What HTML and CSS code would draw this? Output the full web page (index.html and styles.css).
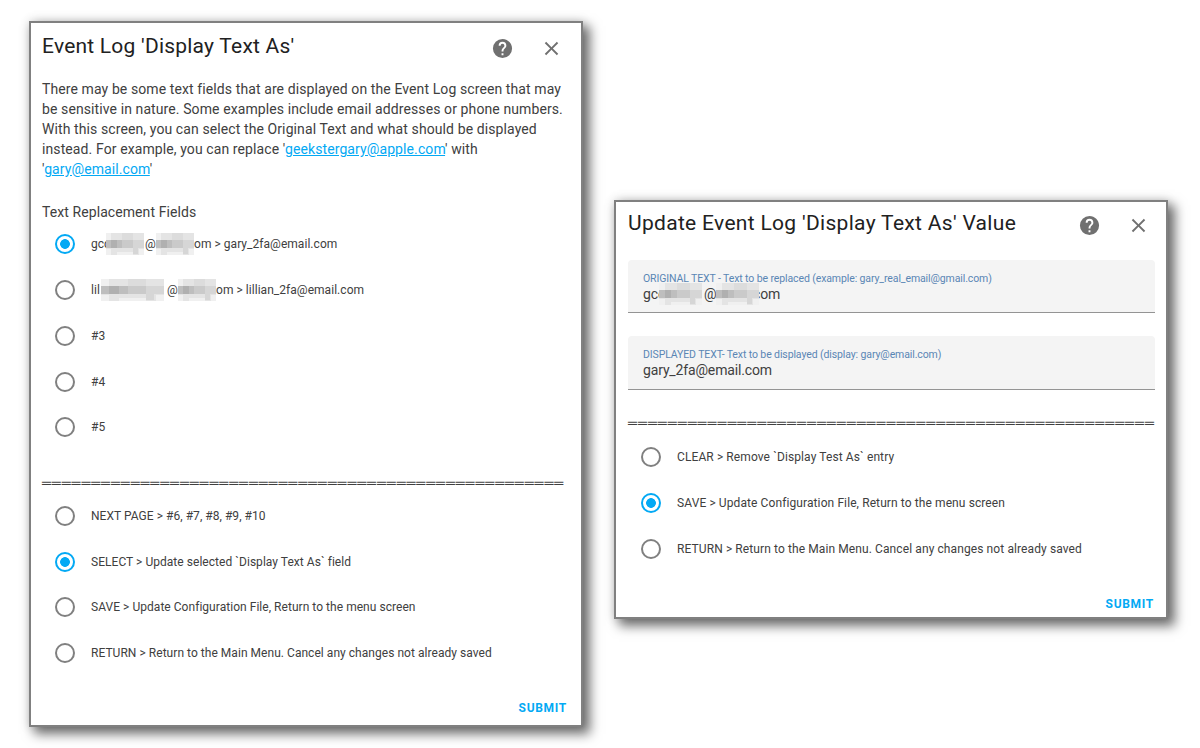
FILE: index.html
```html
<!DOCTYPE html>
<html lang="en">
<head>
<meta charset="utf-8">
<title>Event Log</title>
<link rel="stylesheet" href="styles.css">
</head>
<body>
<svg width="0" height="0" class="defs">
  <symbol id="help" viewBox="0 0 24 24"><path d="M15.07 11.25L14.17 12.17C13.45 12.89 13 13.5 13 15H11V14.5C11 13.39 11.45 12.39 12.17 11.67L13.41 10.41C13.78 10.05 14 9.55 14 9C14 7.89 13.1 7 12 7A2 2 0 0 0 10 9H8A4 4 0 0 1 12 5A4 4 0 0 1 16 9C16 9.88 15.64 10.67 15.07 11.25M13 19H11V17H13M12 2A10 10 0 0 0 2 12A10 10 0 0 0 12 22A10 10 0 0 0 22 12C22 6.47 17.5 2 12 2Z"/></symbol>
  <symbol id="close" viewBox="0 0 24 24"><path d="M19 6.41L17.59 5L12 10.59L6.41 5L5 6.41L10.59 12L5 17.59L6.41 19L12 13.41L17.59 19L19 17.59L13.41 12L19 6.41Z"/></symbol>
  <symbol id="mosaic" viewBox="0 0 38 22" preserveAspectRatio="none">
    <g shape-rendering="crispEdges">
    <path fill="#e4e4e4" d="M0 0h38v22H0z"/>
    <path fill="#f0f0f0" d="M0 0h5v7H0zM0 16h5v6H0zM11 19h16v3H11zM33 16h5v6h-5z"/>
    <path fill="#dcdcdc" d="M16 0h11v7H16z"/>
    <path fill="#bebebe" d="M0 7h27v8H0z"/>
    <path fill="#b0b0b0" d="M5 7h6v8H5z"/>
    <path fill="#cacaca" d="M16 7h11v8H16z"/>
    <path fill="#d6d6d6" d="M27 7h11v8H27zM27 15h5v6h-5z"/>
    </g>
  </symbol>
</svg>
<main class="stage">
  <section class="dialog dialog-list">
    <header class="head">
      <h1 class="title">Event Log 'Display Text As'</h1>
      <svg class="icon"><use href="#help"/></svg>
      <svg class="icon"><use href="#close"/></svg>
    </header>
    <p class="intro">There may be some text fields that are displayed on the Event Log screen that may<br>be sensitive in nature. Some examples include email addresses or phone numbers.<br>With this screen, you can select the Original Text and what should be displayed<br>instead. For example, you can replace '<a class="link">geekstergary@apple.com</a>' with<br>'<a class="link">gary@email.com</a>'</p>
    <p class="group">Text Replacement Fields</p>
    <ul class="options">
      <li class="option"><i class="radio on"></i><span class="label masked"><span class="pre">gcc</span><svg class="mosaic m1"><use href="#mosaic"/></svg><span class="at">@</span><svg class="mosaic m1"><use href="#mosaic"/></svg><span>om &gt; gary_2fa@email.com</span></span></li>
      <li class="option"><i class="radio"></i><span class="label masked"><span class="pre short">lil</span><svg class="mosaic m2"><use href="#mosaic"/></svg><span class="at wide">@</span><svg class="mosaic m1"><use href="#mosaic"/></svg><span>om &gt; lillian_2fa@email.com</span></span></li>
      <li class="option"><i class="radio"></i><span class="label">#3</span></li>
      <li class="option"><i class="radio"></i><span class="label">#4</span></li>
      <li class="option"><i class="radio"></i><span class="label">#5</span></li>
    </ul>
    <p class="rule">═════════════════════════════════════════════════════</p>
    <ul class="options">
      <li class="option"><i class="radio"></i><span class="label">NEXT PAGE &gt; #6, #7, #8, #9, #10</span></li>
      <li class="option"><i class="radio on"></i><span class="label">SELECT &gt; Update selected `Display Text As` field</span></li>
      <li class="option"><i class="radio"></i><span class="label">SAVE &gt; Update Configuration File, Return to the menu screen</span></li>
      <li class="option"><i class="radio"></i><span class="label">RETURN &gt; Return to the Main Menu. Cancel any changes not already saved</span></li>
    </ul>
    <button class="submit">SUBMIT</button>
  </section>
  <section class="dialog dialog-edit">
    <header class="head">
      <h1 class="title">Update Event Log 'Display Text As' Value</h1>
      <svg class="icon"><use href="#help"/></svg>
      <svg class="icon"><use href="#close"/></svg>
    </header>
    <div class="field">
      <span class="caption">ORIGINAL TEXT - Text to be replaced (example: gary_real_email@gmail.com)</span>
      <span class="value masked"><span class="pre">gcc</span><svg class="mosaic m3"><use href="#mosaic"/></svg><span class="at">@</span><svg class="mosaic m3"><use href="#mosaic"/></svg><span class="tail">com</span></span>
    </div>
    <div class="field">
      <span class="caption">DISPLAYED TEXT- Text to be displayed (display: gary@email.com)</span>
      <span class="value">gary_2fa@email.com</span>
    </div>
    <p class="rule">═════════════════════════════════════════════════════</p>
    <ul class="options">
      <li class="option"><i class="radio"></i><span class="label">CLEAR &gt; Remove `Display Test As` entry</span></li>
      <li class="option"><i class="radio on"></i><span class="label">SAVE &gt; Update Configuration File, Return to the menu screen</span></li>
      <li class="option"><i class="radio"></i><span class="label">RETURN &gt; Return to the Main Menu. Cancel any changes not already saved</span></li>
    </ul>
    <button class="submit">SUBMIT</button>
  </section>
</main>
</body>
</html>
```
FILE: styles.css
```css
* { box-sizing: border-box; }
body { margin: 0; background: #fff; font-family: Roboto, "Liberation Sans", sans-serif; color: #404040; overflow: hidden; }
.defs { position: absolute; }
.stage { display: flex; align-items: flex-start; width: 1200px; height: 748px; padding: 21px 0 0 29px; }
.dialog { display: flex; flex-direction: column; border: 2px solid #808080; background: #fff; box-shadow: 6px 6px 11px 1px rgba(0,0,0,.55), 0 0 10px rgba(0,0,0,.15); }
.dialog-list { width: 554px; height: 706px; padding-left: 11px; }
.dialog-edit { width: 554px; height: 419px; margin: 179px 0 0 31px; padding-left: 12px; }
.head { display: flex; align-items: center; height: 51px; }
.dialog-edit .head { height: 46px; }
.title { flex: 1; margin: 0 0 5px; font-size: 21px; line-height: 28px; font-weight: 400; letter-spacing: .22px; color: #212121; white-space: nowrap; }
.dialog-edit .title { margin-bottom: 5px; letter-spacing: .31px; }
.icon { width: 23px; height: 23px; margin-right: 26px; fill: #707070; }
.icon:last-child { margin-right: 18px; }
.dialog-edit .icon:last-child { margin-right: 16px; }
.intro, .group, .rule { margin: 0; white-space: nowrap; }
.intro { margin-top: 5px; font-size: 14px; line-height: 20px; letter-spacing: .1px; }
.link { color: #03a9f4; text-decoration: underline; }
.group { margin-top: 22.6px; font-size: 14px; line-height: 20px; letter-spacing: .08px; }
.options { list-style: none; margin: 0; padding: 0; }
.option { display: flex; align-items: center; height: 45.7px; padding-left: 13px; }
.dialog-edit .option { height: 46px; }
.radio { flex: none; width: 20px; height: 20px; margin-right: 16px; border: 2px solid #808080; border-radius: 50%; }
.radio.on { border-color: #03a9f4; background: radial-gradient(circle, #03a9f4 4.5px, transparent 5.2px); }
.label { font-size: 12px; line-height: 20px; letter-spacing: .04px; white-space: nowrap; }
.dialog-edit .label { letter-spacing: .1px; }
.masked { display: flex; align-items: center; }
.pre { width: 15px; }
.pre.short { width: 10px; }
.at { width: 12px; padding-left: 1px; }
.at.wide { width: 14px; padding-left: 3px; }
.mosaic { position: relative; height: 22px; }
.m1 { width: 38px; }
.m2 { width: 63px; }
.m3 { width: 43px; }
.value .pre { width: 16px; }
.value .at { width: 14px; padding-left: 2px; }
.tail { margin-left: -6px; }
.rule { margin-top: 25px; height: 18px; font: 15px/20px "Liberation Mono", monospace; letter-spacing: .85px; }
.dialog-edit .rule { margin-top: 25px; height: 19px; letter-spacing: .94px; }
.submit { align-self: flex-end; margin: auto 14px 8px 0; padding: 0; border: 0; background: none; color: #03a9f4; font: 700 12px/18px Roboto, sans-serif; letter-spacing: .7px; }
.dialog-edit .submit { margin: auto 12px 4px 0; }
.field { display: flex; flex-direction: column; width: 527px; height: 53px; margin-top: 12px; padding: 11px 0 0 15px; border-bottom: 1px solid #949494; border-radius: 4px 4px 0 0; background: #f4f4f4; }
.field + .field { height: 54px; margin-top: 23px; }
.caption { font-size: 10.5px; line-height: 15px; letter-spacing: -.11px; color: #5a86b4; white-space: nowrap; }
.value { font-size: 14px; line-height: 16px; letter-spacing: -.15px; height: 16px; }
```
